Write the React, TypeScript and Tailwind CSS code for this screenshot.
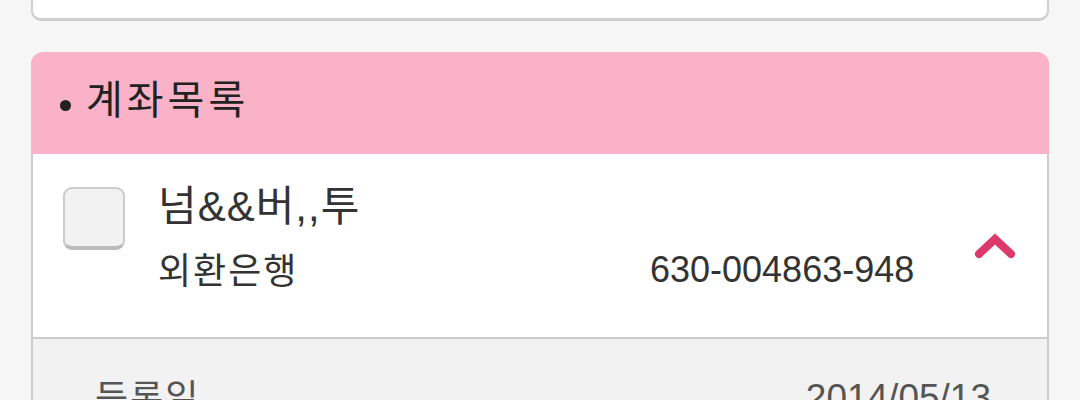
import React from "react";

const KR = { fontFamily: '"Noto Sans CJK KR", "Liberation Sans", sans-serif' };
const NUM = { fontFamily: '"Liberation Sans", "Noto Sans CJK KR", sans-serif' };

export default function App() {
  return (
    <div className="h-[400px] w-[1080px] overflow-hidden bg-[#f6f6f6] px-[31px]" style={KR}>
      <div className="h-[21px] rounded-b-[10px] border-x-2 border-b-[3px] border-[#cfcfcf] bg-white" />
      <div className="mt-[31px] flex h-[102px] items-center rounded-t-[12px] bg-[#f9b2c7] pl-[29px]">
        <span className="mt-[4px] mr-[15px] block h-[11px] w-[11px] shrink-0 rounded-full bg-[#222]" />
        <span className="mt-[-12px] text-[40px] leading-none tracking-[4px] text-[#222]">계좌목록</span>
      </div>
      <div className="flex h-[185px] items-start border-x-2 border-b-2 border-[#cccccc] bg-white pl-[30px] pt-[33px]">
        <div className="h-[63px] w-[62px] shrink-0 rounded-[9px] border-2 border-[#cccccc] border-b-[4px] border-b-[#bbbbbb] bg-[#f2f2f2]" />
        <div className="ml-[33px] flex flex-col">
          <div className="mt-[-5px] text-[42px] leading-none tracking-[1px] text-[#333]">
            넘<span style={NUM}>&amp;&amp;</span>버<span style={NUM}>,,</span>투
          </div>
          <div className="mt-[20px] flex items-center">
            <span className="w-[492px] text-[36px] leading-none tracking-[2px] text-[#333]">외환은행</span>
            <span className="mt-[4px] text-[36px] leading-none text-[#333]" style={NUM}>630-004863-948</span>
          </div>
        </div>
        <div className="ml-auto mr-[30px] mt-[44px]">
          <svg width="44" height="30" viewBox="0 0 44 30">
            <polyline points="6,23 22,8 38,23" fill="none" stroke="#dc3a6c" strokeWidth="8" strokeLinecap="round" strokeLinejoin="miter" />
          </svg>
        </div>
      </div>
      <div className="flex h-[80px] items-start justify-between border-x-2 border-[#cccccc] bg-[#f2f2f2] pl-[62px] pr-[56px] pt-[38px]">
        <span className="text-[36px] leading-none tracking-[2px] text-[#555]">등록일</span>
        <span className="mt-[2px] text-[37px] leading-none text-[#555]" style={NUM}>2014/05/13</span>
      </div>
    </div>
  );
}
